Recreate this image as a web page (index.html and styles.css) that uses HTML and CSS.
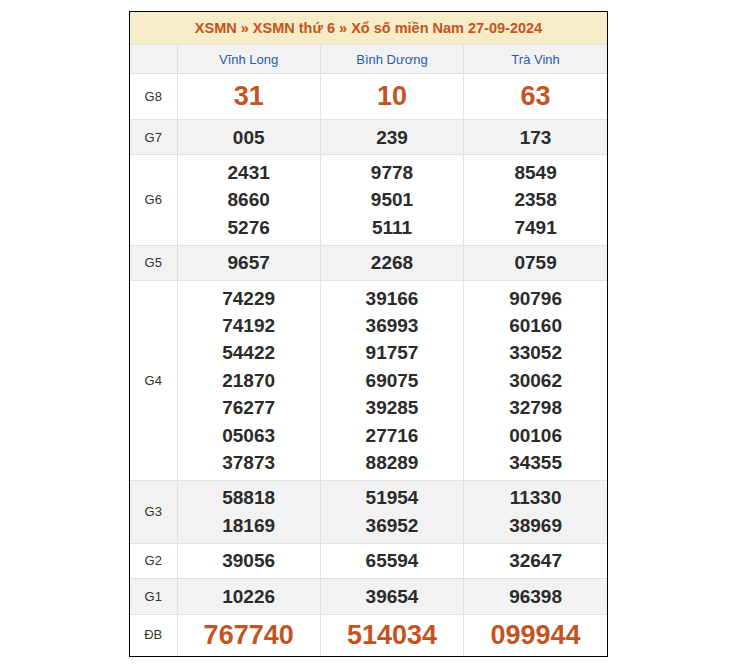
FILE: index.html
```html
<!DOCTYPE html>
<html lang="vi">
<head>
<meta charset="utf-8">
<link rel="stylesheet" href="styles.css">
</head>
<body>
<div class="box">
<table class="kq">
  <colgroup><col class="c-lbl"><col><col><col></colgroup>
  <thead>
    <tr><th colspan="4" class="title">XSMN » XSMN thứ 6 » Xổ số miền Nam 27-09-2024</th></tr>
    <tr class="prov"><th class="lbl"></th><th>Vĩnh Long</th><th>Bình Dương</th><th>Trà Vinh</th></tr>
  </thead>
  <tbody>
    <tr class="g8"><td class="lbl">G8</td><td class="big">31</td><td class="big">10</td><td class="big">63</td></tr>
    <tr class="alt"><td class="lbl">G7</td><td>005</td><td>239</td><td>173</td></tr>
    <tr><td class="lbl">G6</td><td><div>2431</div><div>8660</div><div>5276</div></td><td><div>9778</div><div>9501</div><div>5111</div></td><td><div>8549</div><div>2358</div><div>7491</div></td></tr>
    <tr class="alt"><td class="lbl">G5</td><td>9657</td><td>2268</td><td>0759</td></tr>
    <tr><td class="lbl">G4</td>
      <td><div>74229</div><div>74192</div><div>54422</div><div>21870</div><div>76277</div><div>05063</div><div>37873</div></td>
      <td><div>39166</div><div>36993</div><div>91757</div><div>69075</div><div>39285</div><div>27716</div><div>88289</div></td>
      <td><div>90796</div><div>60160</div><div>33052</div><div>30062</div><div>32798</div><div>00106</div><div>34355</div></td></tr>
    <tr class="alt"><td class="lbl">G3</td><td><div>58818</div><div>18169</div></td><td><div>51954</div><div>36952</div></td><td><div>11330</div><div>38969</div></td></tr>
    <tr><td class="lbl">G2</td><td>39056</td><td>65594</td><td>32647</td></tr>
    <tr class="alt"><td class="lbl">G1</td><td>10226</td><td>39654</td><td>96398</td></tr>
    <tr class="db"><td class="lbl">ĐB</td><td class="big">767740</td><td class="big">514034</td><td class="big">099944</td></tr>
  </tbody>
</table>
</div>
</body>
</html>
```
FILE: styles.css
```css
html, body {
  margin: 0;
  padding: 0;
  background: #fff;
}
body {
  padding: 11px 0 0 129px;
  font-family: "Liberation Sans", Arial, sans-serif;
}
.box {
  width: 477px;
  border: 1px solid #000;
}
.kq {
  border-collapse: collapse;
  border-style: hidden;
  width: 477px;
  table-layout: fixed;
}
.c-lbl {
  width: 47px;
}
.kq th, .kq td {
  border: 1px solid #e2e2e2;
  text-align: center;
  padding: 0;
}
.kq .title {
  background: #f7ecc8;
  color: #c4531f;
  font-size: 14.5px;
  font-weight: bold;
  height: 32px;
}
.prov th {
  background: #f2f2f2;
  color: #2a5da6;
  font-weight: normal;
  font-size: 13px;
  height: 28px;
}
.kq td {
  font-size: 19px;
  font-weight: bold;
  color: #2b2b2b;
  line-height: 27.4px;
  padding: 3.5px 0;
}
.kq td.lbl {
  font-size: 13px;
  font-weight: normal;
  color: #333;
}
.alt td {
  background: #f2f2f2;
}
.kq td.big {
  color: #c4531f;
  font-size: 27px;
  line-height: 38px;
}
.g8 td.big {
  line-height: 37px;
  padding-bottom: 4.5px;
}
.db td.big {
  line-height: 34px;
}
```
